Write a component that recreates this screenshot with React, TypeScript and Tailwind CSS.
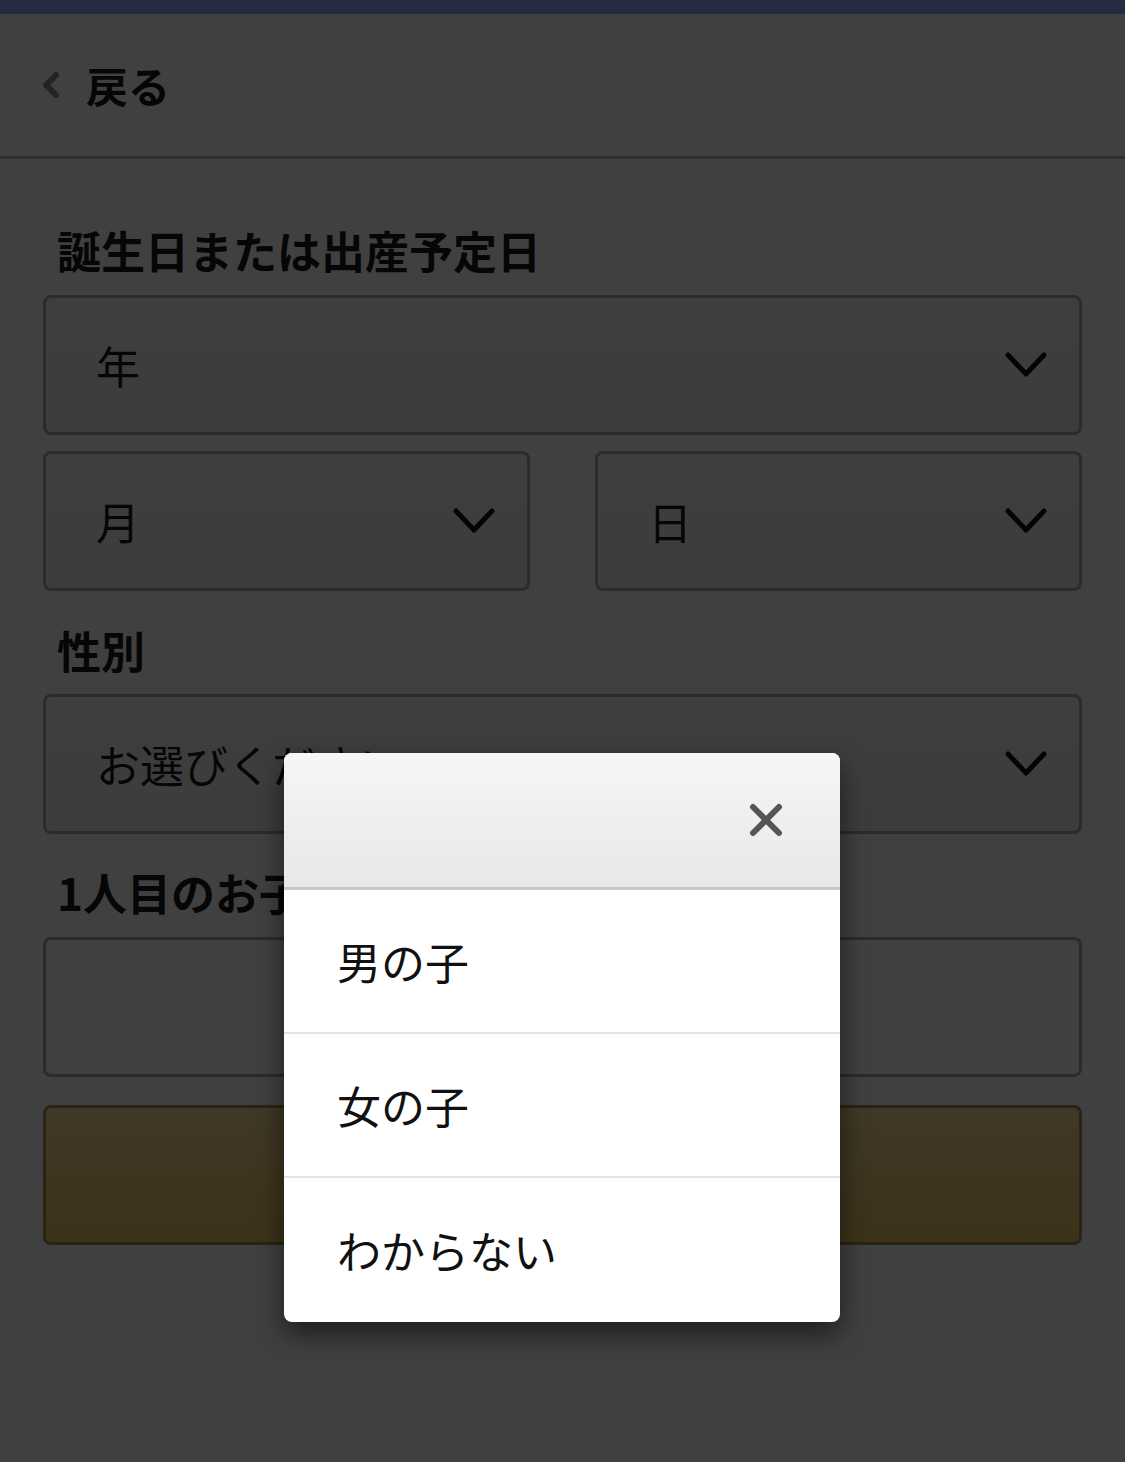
import React from 'react';

const font = { fontFamily: '"Noto Sans CJK JP", "Noto Sans", sans-serif' };

function Chevron() {
  return (
    <svg width="44" height="30" viewBox="0 0 44 30" className="flex-shrink-0">
      <path d="M4 5 L22 24 L40 5" fill="none" stroke="#111" strokeWidth="5" strokeLinecap="round" strokeLinejoin="round" />
    </svg>
  );
}

function SelectBox({ label }: { label: string }) {
  return (
    <div className="flex items-center justify-between h-[140px] pl-[50px] pr-[31px] rounded-[8px] border-[3px] border-[#acacb4] bg-gradient-to-b from-[#f8f8fa] to-[#eeeef2]">
      <span className="text-[44px] leading-none text-[#1a1a1a]">{label}</span>
      <Chevron />
    </div>
  );
}

function Label({ text, className }: { text: string; className: string }) {
  return (
    <h2 className={`text-[44px] leading-none font-bold text-[#1a1a1a] pl-[14px] whitespace-nowrap ${className}`}>
      {text}
    </h2>
  );
}

const options = ['男の子', '女の子', 'わからない'];

export default function App() {
  return (
    <div className="relative w-[1125px] h-[1462px] bg-white overflow-hidden" style={font}>
      <div className="h-[14px] bg-[#8cb4fc]" />
      <header className="h-[145px] flex items-center pl-[40px] gap-[24px] border-b-[3px] border-[#b8b8b8]">
        <svg width="22" height="30" viewBox="0 0 22 30">
          <path d="M16 5 L6 15 L16 25" fill="none" stroke="#8a8a8a" strokeWidth="6" strokeLinecap="round" strokeLinejoin="round" />
        </svg>
        <span className="text-[42px] font-bold leading-none text-[#1a1a1a]">戻る</span>
      </header>

      <main className="px-[43px]">
        <Label text="誕生日または出産予定日" className="mt-[69px] mb-[23px]" />
        <SelectBox label="年" />
        <div className="grid grid-cols-2 gap-x-[65px] mt-[16px]">
          <SelectBox label="月" />
          <SelectBox label="日" />
        </div>

        <Label text="性別" className="mt-[37px] mb-[22px]" />
        <SelectBox label="お選びください" />

        <Label text="1人目のお子さまのお名前" className="mt-[36px] mb-[23px]" />
        <div className="h-[140px] rounded-[8px] border-[3px] border-[#acacb4] bg-white" />

        <button className="mt-[28px] w-full h-[140px] rounded-[8px] border-[3px] border-[#a89050] bg-gradient-to-b from-[#fce098] to-[#efc868] text-[44px] font-bold text-[#333]">
          次へ
        </button>
      </main>

      {/* overlay */}
      <div className="absolute inset-0 bg-black/75" />

      {/* picker dialog */}
      <div className="absolute left-[284px] top-[753px] w-[556px] rounded-[8px] bg-white overflow-hidden shadow-[0_12px_28px_rgba(0,0,0,0.55)]">
        <div className="h-[137px] flex items-center justify-end pr-[56px] bg-gradient-to-b from-[#f6f6f6] to-[#e8e8e8] border-b-[3px] border-[#c8c8c8]">
          <svg width="36" height="36" viewBox="0 0 36 36">
            <path d="M5 5 L31 31 M31 5 L5 31" stroke="#555" strokeWidth="6" strokeLinecap="round" />
          </svg>
        </div>
        {options.map((opt, i) => (
          <div
            key={opt}
            className={`h-[144px] flex items-center pl-[53px] ${i < options.length - 1 ? 'border-b-[2px] border-[#e5e5e5]' : ''}`}
          >
            <span className="text-[44px] leading-none text-[#111]">{opt}</span>
          </div>
        ))}
      </div>
    </div>
  );
}
